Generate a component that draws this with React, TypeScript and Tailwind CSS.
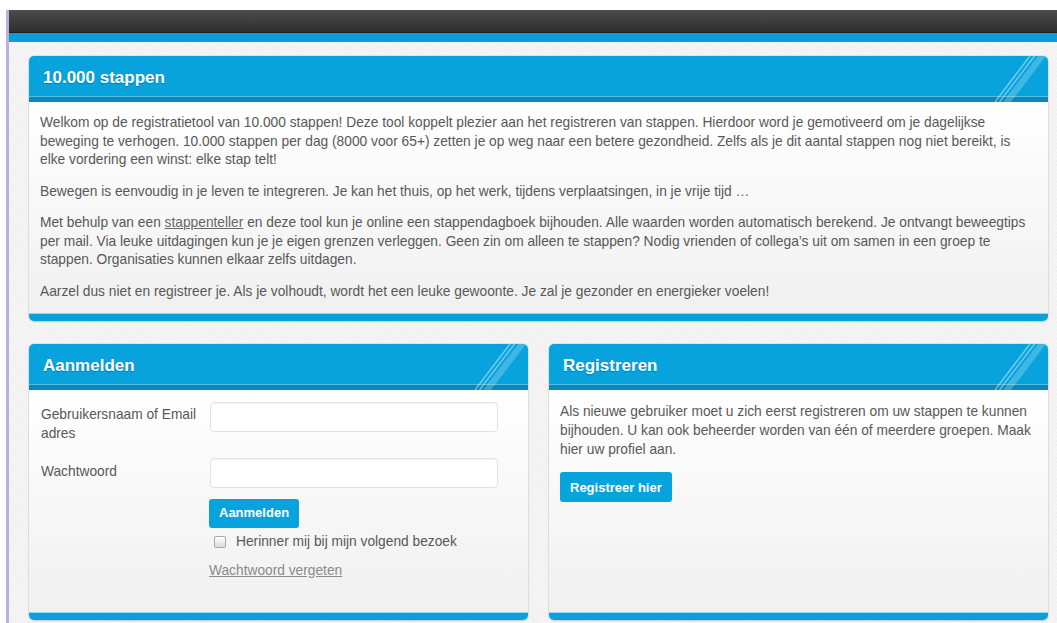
import React from "react";

function HeaderStripes() {
  return (
    <svg
      className="absolute right-0 top-0"
      width="56"
      height="46"
      viewBox="0 0 56 46"
      fill="none"
      aria-hidden="true"
    >
      <line x1="38" y1="0" x2="3" y2="46" stroke="white" strokeOpacity="0.45" strokeWidth="1.4" />
      <line x1="42.5" y1="0" x2="7.5" y2="46" stroke="white" strokeOpacity="0.45" strokeWidth="1.4" />
      <polygon points="46,0 54,0 19,46 11,46" fill="white" fillOpacity="0.22" />
    </svg>
  );
}

function Panel({
  title,
  children,
  bodyClass,
}: {
  title: string;
  children: React.ReactNode;
  bodyClass: string;
}) {
  return (
    <section className="flex flex-col rounded-[5px] overflow-hidden shadow-[0_0_0_1px_rgba(0,0,0,0.06),0_1px_2px_rgba(0,0,0,0.12)]">
      <header className="relative">
        <div className="h-[40px] bg-[#08a3dd] flex items-center pl-[14px] pt-[4px]">
          <h2 className="text-[17px] font-bold text-white [text-shadow:0_1px_1px_rgba(0,0,0,0.25)]">
            {title}
          </h2>
        </div>
        <div className="h-px bg-[#4fc0ea]" />
        <div className="h-[5px] bg-[#0b86b8]" />
        <HeaderStripes />
      </header>
      <div
        className={`flex-1 bg-gradient-to-b from-white to-[#f0f0f0] text-[13.75px] text-[#585858] ${bodyClass}`}
      >
        {children}
      </div>
      <div className="h-px bg-[#8fd9f3]" />
      <div className="h-[7px] bg-[#0aa1da]" />
    </section>
  );
}

function TextInput({ type }: { type: string }) {
  return (
    <input
      type={type}
      className="h-[30px] w-[288px] rounded-[4px] border border-[#e2e2e2] bg-white px-2 shadow-[inset_0_1px_1px_rgba(0,0,0,0.04)] outline-none"
    />
  );
}

function BlueButton({ label, className }: { label: string; className: string }) {
  return (
    <button
      type="button"
      className={`rounded-[3px] bg-[#08a3dd] text-[13px] font-bold text-white ${className}`}
    >
      {label}
    </button>
  );
}

export default function App() {
  return (
    <div className="min-h-[623px] bg-white pt-[10px] flex font-['Liberation_Sans',Arial,sans-serif]">
      <div className="ml-[6px] w-[3px] bg-[#bab1da]" />
      <div className="flex-1 flex flex-col">
        {/* top navigation bar */}
        <div className="h-[23px] bg-gradient-to-b from-[#4c4c4c] via-[#3d3d3d] to-[#2e2e2e] border-b border-[#1e1e1e]" />
        <div className="h-[9px] bg-[#0a9ed8]" />

        <main className="flex-1 pt-[14px] pl-[20px] pr-[9px] pb-[2px] bg-[#f3f3f3] bg-[repeating-linear-gradient(45deg,#f5f5f5_0px,#f5f5f5_2px,#efefef_2px,#efefef_3px)]">
          <Panel title="10.000 stappen" bodyClass="px-[11px] pt-[12px] pb-[12px] leading-[18.5px]">
            <p className="mb-[13px]">
              Welkom op de registratietool van 10.000 stappen! Deze tool koppelt plezier aan het
              registreren van stappen. Hierdoor word je gemotiveerd om je dagelijkse beweging te
              verhogen. 10.000 stappen per dag (8000 voor 65+) zetten je op weg naar een betere
              gezondheid. Zelfs als je dit aantal stappen nog niet bereikt, is elke vordering een
              winst: elke stap telt!
            </p>
            <p className="mb-[13px]">
              Bewegen is eenvoudig in je leven te integreren. Je kan het thuis, op het werk, tijdens
              verplaatsingen, in je vrije tijd …
            </p>
            <p className="mb-[13px]">
              Met behulp van een <a href="#" className="underline text-[#666]">stappenteller</a> en
              deze tool kun je online een stappendagboek bijhouden. Alle waarden worden automatisch
              berekend. Je ontvangt beweegtips per mail. Via leuke uitdagingen kun je je eigen
              grenzen verleggen. Geen zin om alleen te stappen? Nodig vrienden of collega’s uit om
              samen in een groep te stappen. Organisaties kunnen elkaar zelfs uitdagen.
            </p>
            <p>
              Aarzel dus niet en registreer je. Als je volhoudt, wordt het een leuke gewoonte. Je zal
              je gezonder en energieker voelen!
            </p>
          </Panel>

          <div className="mt-[23px] grid grid-cols-2 gap-[21px]">
            <Panel title="Aanmelden" bodyClass="pl-[12px] pr-[11px] pt-[12px] pb-[32px] leading-[18.5px]">
              <div className="flex items-start mb-[15px]">
                <label className="w-[169px] pt-[4px] pr-[6px]">Gebruikersnaam of Email adres</label>
                <TextInput type="text" />
              </div>
              <div className="flex items-start">
                <label className="w-[169px] pt-[5px]">Wachtwoord</label>
                <TextInput type="password" />
              </div>
              <div className="ml-[168px] pt-[11px]">
                <BlueButton label="Aanmelden" className="h-[29px] px-[10px]" />
                <label className="mt-[5px] flex items-center">
                  <span className="ml-[5px] mr-[10px] h-[12px] w-[12px] rounded-[2px] border border-[#a9a9a9] bg-gradient-to-b from-white to-[#dcdcdc]" />
                  <span>Herinner mij bij mijn volgend bezoek</span>
                </label>
                <div className="mt-[10px]">
                  <a href="#" className="underline text-[#8a8a8a]">
                    Wachtwoord vergeten
                  </a>
                </div>
              </div>
            </Panel>

            <Panel title="Registreren" bodyClass="px-[11px] pt-[12px] leading-[19px]">
              <p>
                Als nieuwe gebruiker moet u zich eerst registreren om uw stappen te kunnen bijhouden.
                U kan ook beheerder worden van één of meerdere groepen. Maak hier uw profiel aan.
              </p>
              <BlueButton label="Registreer hier" className="mt-[13px] h-[30px] px-[10px]" />
            </Panel>
          </div>
        </main>
      </div>
    </div>
  );
}
